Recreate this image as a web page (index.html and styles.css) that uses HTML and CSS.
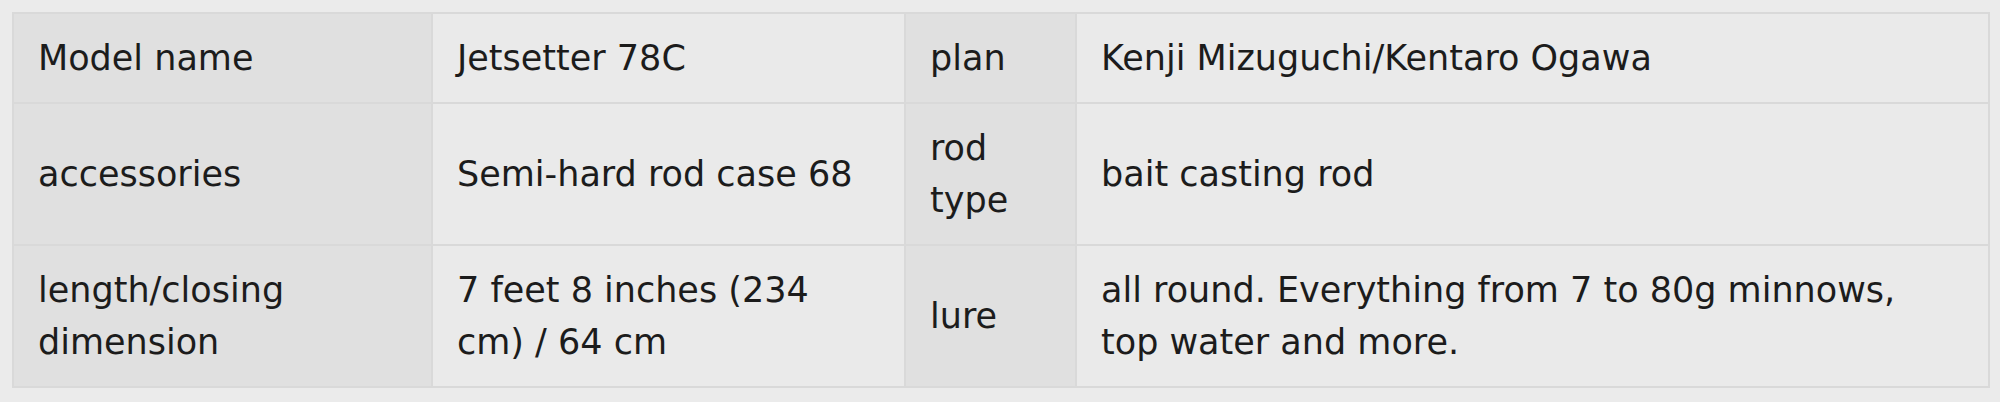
FILE: index.html
```html
<!DOCTYPE html>
<html lang="en">
<head>
<meta charset="utf-8">
<title>Spec table</title>
<link rel="stylesheet" href="styles.css">
</head>
<body>
<table class="spec">
  <colgroup>
    <col class="c1"><col class="c2"><col class="c3"><col class="c4">
  </colgroup>
  <tbody>
    <tr>
      <th>Model name</th>
      <td>Jetsetter 78C</td>
      <th>plan</th>
      <td class="wide">Kenji Mizuguchi/Kentaro Ogawa</td>
    </tr>
    <tr>
      <th>accessories</th>
      <td>Semi-hard rod case 68</td>
      <th>rod type</th>
      <td class="wide">bait casting rod</td>
    </tr>
    <tr>
      <th>length/closing dimension</th>
      <td>7 feet 8 inches (234 cm) / 64 cm</td>
      <th>lure</th>
      <td class="wide">all round. Everything from 7 to 80g minnows, top water and more.</td>
    </tr>
  </tbody>
</table>
</body>
</html>
```

FILE: styles.css
```css
html, body {
  margin: 0;
  background: #ebebeb;
}
body {
  padding: 12px 12px 0 12px;
  font-family: "DejaVu Sans", Verdana, sans-serif;
  color: #1c1c1c;
}
.spec {
  width: 1976px;
  border-collapse: collapse;
  table-layout: fixed;
  border: 2px solid #d6d6d6;
}
.c1 { width: 419px; }
.c2 { width: 473px; }
.c3 { width: 171px; }
.c4 { width: 913px; }
.spec th,
.spec td {
  font-size: 35px;
  line-height: 52px;
  font-weight: normal;
  text-align: left;
  vertical-align: middle;
  padding: 18px 24px;
  border: 2px solid #d9d9d9;
}
.spec th {
  background: #e0e0e0;
}
.spec td {
  background: #eaeaea;
}
.spec td.wide {
  padding-right: 44px;
}
```
